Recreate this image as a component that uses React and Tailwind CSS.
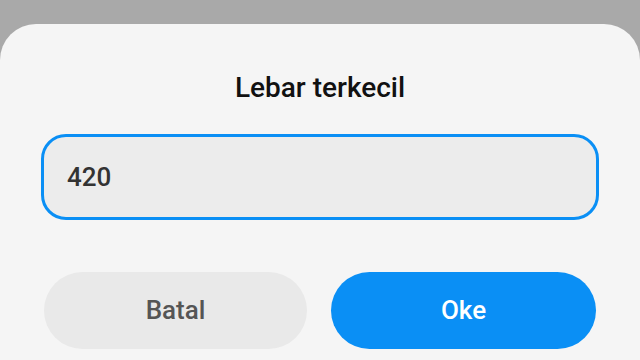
export default function App() {
  return (
    <div
      className="w-[640px] h-[360px] bg-[#a9a9a9] pt-[24px] overflow-hidden"
      style={{ fontFamily: "Roboto, 'Liberation Sans', sans-serif" }}
    >
      <div className="h-[336px] bg-[#f5f5f5] rounded-t-[36px] flex flex-col px-[41px] pt-[48px]">
        <div className="text-center text-[28px] leading-[32px] font-medium text-[#111]">
          Lebar terkecil
        </div>
        <div className="mt-[30px] h-[86px] rounded-[25px] border-[3px] border-[#0a8ff5] bg-[#ececec] flex items-center pl-[23px]">
          <span className="text-[26px] font-medium text-[#333]">420</span>
        </div>
        <div className="mt-[52px] flex gap-[24px] px-[3px]">
          <button className="w-[263px] h-[77px] shrink-0 rounded-full bg-[#e9e9e9] text-[26px] font-medium text-[#555]">
            Batal
          </button>
          <button className="w-[265px] h-[77px] shrink-0 rounded-full bg-[#0a8ff5] text-[26px] font-medium text-white">
            Oke
          </button>
        </div>
      </div>
    </div>
  );
}
